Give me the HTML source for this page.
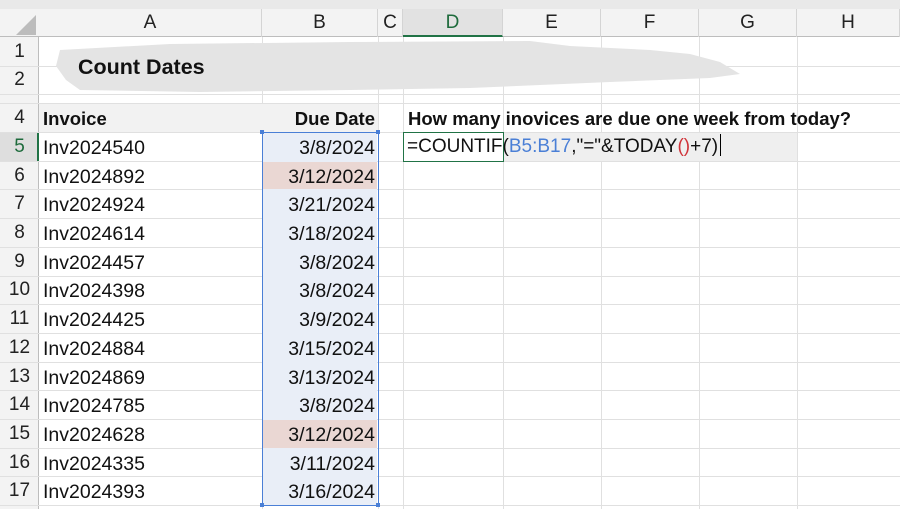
<!DOCTYPE html>
<html><head><style>
*{margin:0;padding:0;box-sizing:border-box}
body{width:900px;height:509px;overflow:hidden;background:#fff;font-family:"Liberation Sans",Arial,sans-serif;position:relative;color:#111}
.a{position:absolute}
.vl{position:absolute;top:37px;bottom:0;width:1px;background:#e0e0e0}
.hl{position:absolute;left:0;right:0;height:1px;background:#e0e0e0}
.ch{position:absolute;top:9px;height:28px;line-height:28px;text-align:center;font-size:19px;color:#222;border-right:1px solid #d4d4d4}
.rh{position:absolute;left:0;width:39px;text-align:center;font-size:19px;color:#222}
.c{position:absolute;font-size:19.5px;line-height:30px;white-space:nowrap}
.b{font-weight:bold;font-size:18.5px}
</style></head><body>
<div class="a" style="left:0;top:0;width:900px;height:9px;background:#e9e9e9"></div>
<div class="a" style="left:0;top:9px;width:900px;height:28px;background:#f3f3f3;border-bottom:1px solid #bdbdbd"></div>
<div class="a" style="left:0;top:37px;width:39px;height:472px;background:#f3f3f3;border-right:1px solid #bdbdbd"></div>
<svg class="a" style="left:12px;top:13px" width="24" height="22"><polygon points="24,2 24,22 4,22" fill="#bcbcbc"/></svg>
<div class="ch" style="left:39px;width:223px">A</div>
<div class="ch" style="left:262px;width:116px">B</div>
<div class="ch" style="left:378px;width:25px">C</div>
<div class="ch" style="left:403px;width:100px;background:#e2e2e2;border-bottom:2px solid #217346;color:#1e6b3c">D</div>
<div class="ch" style="left:503px;width:98px">E</div>
<div class="ch" style="left:601px;width:98px">F</div>
<div class="ch" style="left:699px;width:98px">G</div>
<div class="ch" style="left:797px;width:103px">H</div>
<div class="vl" style="left:262px"></div><div class="vl" style="left:378px"></div><div class="vl" style="left:403px"></div><div class="vl" style="left:503px"></div><div class="vl" style="left:601px"></div><div class="vl" style="left:699px"></div><div class="vl" style="left:797px"></div>
<div class="hl" style="top:66px"></div><div class="hl" style="top:94px"></div><div class="hl" style="top:103px"></div><div class="hl" style="top:132px"></div>
<div class="hl" style="top:161px"></div><div class="hl" style="top:189px"></div><div class="hl" style="top:218px"></div><div class="hl" style="top:247px"></div><div class="hl" style="top:276px"></div><div class="hl" style="top:304px"></div><div class="hl" style="top:333px"></div><div class="hl" style="top:362px"></div><div class="hl" style="top:390px"></div><div class="hl" style="top:419px"></div><div class="hl" style="top:448px"></div><div class="hl" style="top:476px"></div><div class="hl" style="top:505px"></div>
<svg class="a" style="left:50px;top:38px" width="700" height="56"><path d="M10,12 L120,6 L300,4 L480,3 L520,8 L600,12 L640,16 L670,24 L690,36 L660,40 L560,44 L420,50 L300,52 L150,54 L30,52 L16,42 L6,28 Z" fill="#e4e4e4"/></svg>
<div class="c" style="left:78px;top:52px;font-size:21.5px;font-weight:bold">Count Dates</div>
<div class="a" style="left:39px;top:104px;width:339px;height:28px;background:#f2f2f2"></div>
<div class="c b" style="left:43px;top:104px">Invoice</div>
<div class="c b" style="left:262px;top:104px;width:113px;text-align:right">Due Date</div>
<div class="c b" style="left:408px;top:104px">How many inovices are due one week from today?</div>
<div class="a" style="left:263px;top:133px;width:114px;height:372px;background:#e9eef7"></div>
<div class="a" style="left:263px;top:162px;width:114px;height:27px;background:#ead7d3"></div>
<div class="a" style="left:263px;top:420px;width:114px;height:28px;background:#ead7d3"></div>
<div class="a" style="left:262px;top:132px;width:117px;height:374px;border:1.5px solid #4a7fd6"></div>
<div class="a" style="left:260px;top:130px;width:4px;height:4px;background:#4a7fd6"></div><div class="a" style="left:376px;top:130px;width:4px;height:4px;background:#4a7fd6"></div><div class="a" style="left:260px;top:503px;width:4px;height:4px;background:#4a7fd6"></div><div class="a" style="left:376px;top:503px;width:4px;height:4px;background:#4a7fd6"></div>
<div class="a" style="left:503px;top:133px;width:294px;height:28px;background:#efefef"></div>
<div class="a" style="left:403px;top:132px;width:101px;height:30px;border:1.5px solid #217346"></div>
<div class="c" style="left:407px;top:132px;font-size:19px">=COUNTIF(<span style="color:#4a7fd6">B5:B17</span>,"="&amp;TODAY<span style="color:#d0343a">()</span>+7)<span style="display:inline-block;width:1px;height:22px;background:#000;vertical-align:-4px;margin-left:2px"></span></div>
<div class="a" style="left:0;top:133px;width:39px;height:28px;background:#dedede;border-right:2px solid #217346"></div>
<div class="rh" style="top:38px;line-height:28px">1</div>
<div class="rh" style="top:66px;line-height:28px">2</div>
<div class="rh" style="top:104px;line-height:28px">4</div>
<div class="rh" style="top:133px;line-height:28px;color:#1e6b3c">5</div>
<div class="rh" style="top:162px;line-height:28px">6</div>
<div class="rh" style="top:190px;line-height:28px">7</div>
<div class="rh" style="top:219px;line-height:28px">8</div>
<div class="rh" style="top:248px;line-height:28px">9</div>
<div class="rh" style="top:276px;line-height:28px">10</div>
<div class="rh" style="top:305px;line-height:28px">11</div>
<div class="rh" style="top:334px;line-height:28px">12</div>
<div class="rh" style="top:363px;line-height:28px">13</div>
<div class="rh" style="top:391px;line-height:28px">14</div>
<div class="rh" style="top:420px;line-height:28px">15</div>
<div class="rh" style="top:449px;line-height:28px">16</div>
<div class="rh" style="top:477px;line-height:28px">17</div>
<div class="c" style="left:43px;top:133px">Inv2024540</div><div class="c" style="left:262px;width:113px;text-align:right;top:133px">3/8/2024</div>
<div class="c" style="left:43px;top:162px">Inv2024892</div><div class="c" style="left:262px;width:113px;text-align:right;top:162px">3/12/2024</div>
<div class="c" style="left:43px;top:190px">Inv2024924</div><div class="c" style="left:262px;width:113px;text-align:right;top:190px">3/21/2024</div>
<div class="c" style="left:43px;top:219px">Inv2024614</div><div class="c" style="left:262px;width:113px;text-align:right;top:219px">3/18/2024</div>
<div class="c" style="left:43px;top:248px">Inv2024457</div><div class="c" style="left:262px;width:113px;text-align:right;top:248px">3/8/2024</div>
<div class="c" style="left:43px;top:276px">Inv2024398</div><div class="c" style="left:262px;width:113px;text-align:right;top:276px">3/8/2024</div>
<div class="c" style="left:43px;top:305px">Inv2024425</div><div class="c" style="left:262px;width:113px;text-align:right;top:305px">3/9/2024</div>
<div class="c" style="left:43px;top:334px">Inv2024884</div><div class="c" style="left:262px;width:113px;text-align:right;top:334px">3/15/2024</div>
<div class="c" style="left:43px;top:363px">Inv2024869</div><div class="c" style="left:262px;width:113px;text-align:right;top:363px">3/13/2024</div>
<div class="c" style="left:43px;top:391px">Inv2024785</div><div class="c" style="left:262px;width:113px;text-align:right;top:391px">3/8/2024</div>
<div class="c" style="left:43px;top:420px">Inv2024628</div><div class="c" style="left:262px;width:113px;text-align:right;top:420px">3/12/2024</div>
<div class="c" style="left:43px;top:449px">Inv2024335</div><div class="c" style="left:262px;width:113px;text-align:right;top:449px">3/11/2024</div>
<div class="c" style="left:43px;top:477px">Inv2024393</div><div class="c" style="left:262px;width:113px;text-align:right;top:477px">3/16/2024</div>
</body></html>
